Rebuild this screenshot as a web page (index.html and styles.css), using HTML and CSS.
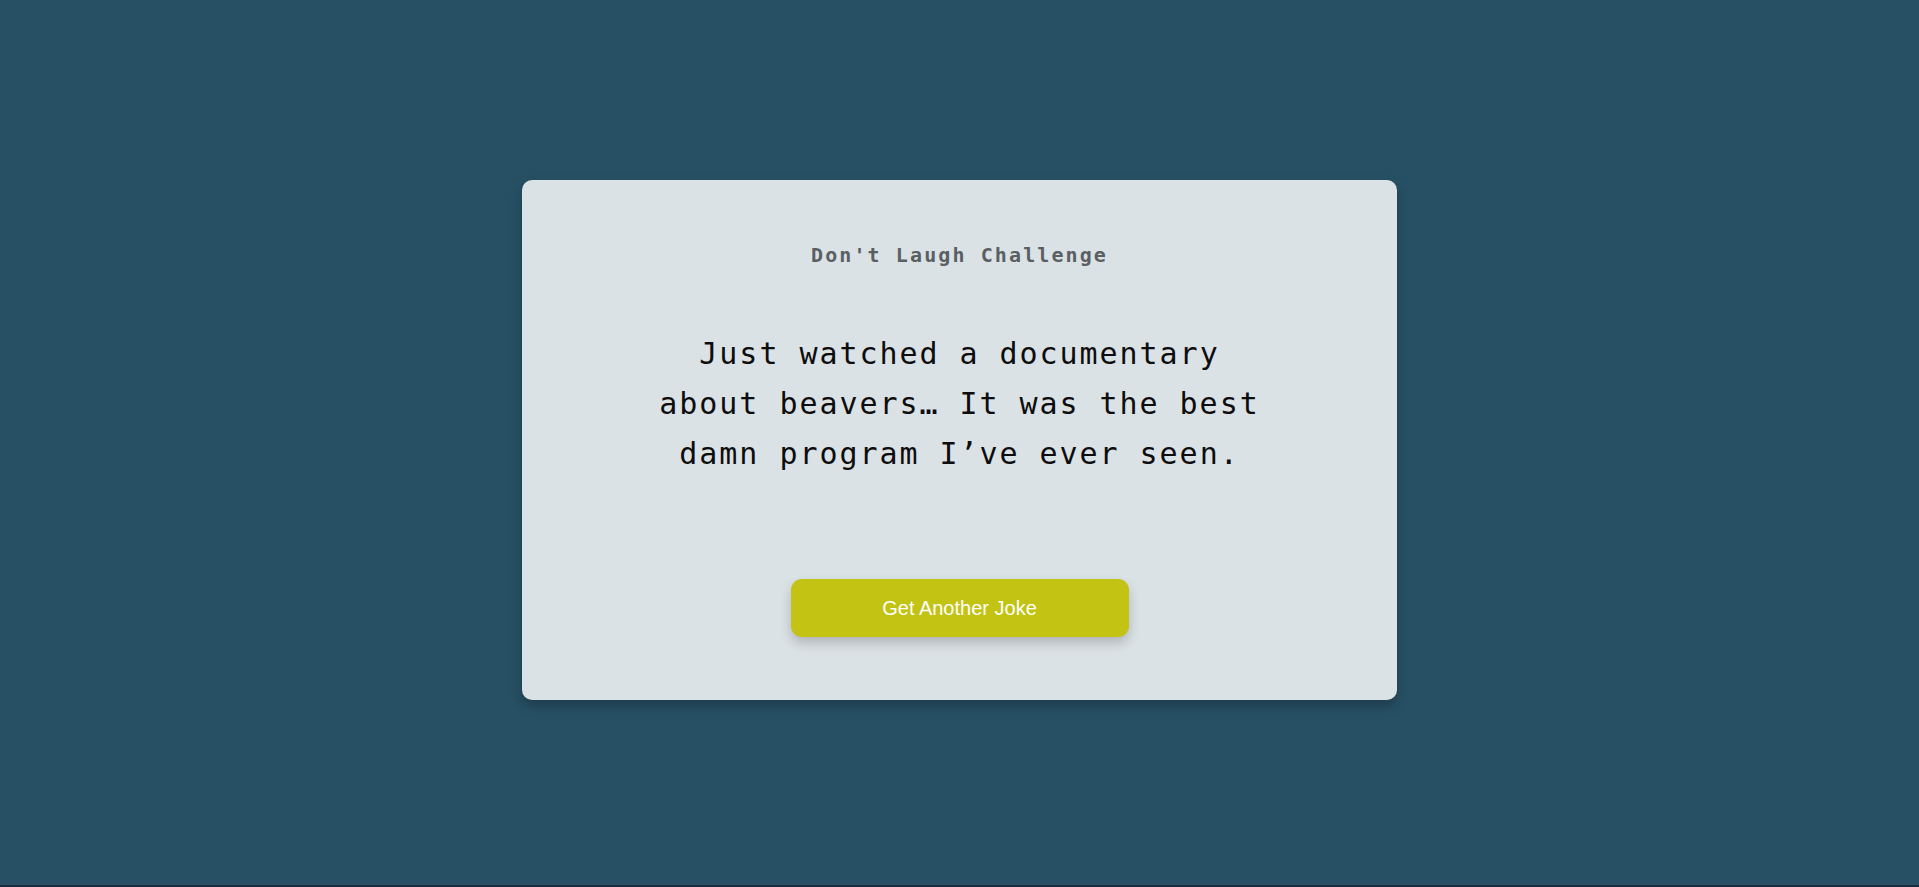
FILE: index.html
```html
<!DOCTYPE html>
<html lang="en">
<head>
<meta charset="utf-8">
<title>Don't Laugh Challenge</title>
<link rel="stylesheet" href="styles.css">
</head>
<body>
<main class="stage">
  <section class="card">
    <h3 class="title">Don't Laugh Challenge</h3>
    <p class="joke">Just watched a documentary about beavers… It was the best damn program I’ve ever seen.</p>
    <button class="btn" type="button">Get Another Joke</button>
  </section>
</main>
<div class="bottom-line"></div>
</body>
</html>
```

FILE: styles.css
```css
* { box-sizing: border-box; }

html, body {
  margin: 0;
  padding: 0;
}

body {
  background: #275064;
  font-family: "DejaVu Sans Mono", monospace;
}

.stage {
  height: 885px;
  padding-bottom: 5px;
  display: flex;
  align-items: center;
  justify-content: center;
}

.card {
  width: 875px;
  height: 520px;
  background: #dbe2e6;
  border-radius: 10px;
  box-shadow: 0 6px 12px rgba(0, 0, 0, 0.25);
  padding: 63px 20px 63px;
  display: flex;
  flex-direction: column;
  align-items: center;
  text-align: center;
}

.title {
  margin: 0;
  font-family: "DejaVu Sans Mono", monospace;
  font-size: 20px;
  line-height: 24px;
  font-weight: bold;
  letter-spacing: 2.1px;
  color: #5a5f63;
}

.joke {
  margin: 62px 0 0;
  max-width: 620px;
  font-family: "DejaVu Sans Mono", monospace;
  font-size: 30px;
  line-height: 50px;
  letter-spacing: 1.95px;
  color: #0d0d0d;
}

.btn {
  margin-top: 100px;
  width: 338px;
  height: 58px;
  border: 0;
  border-radius: 11px;
  background: #c2c313;
  color: #ffffff;
  font-family: "Liberation Sans", Arial, sans-serif;
  font-size: 20px;
  box-shadow: 0 6px 12px rgba(0, 0, 0, 0.2);
  cursor: pointer;
}

.bottom-line {
  height: 2px;
  background: #1b2b3f;
}
```
